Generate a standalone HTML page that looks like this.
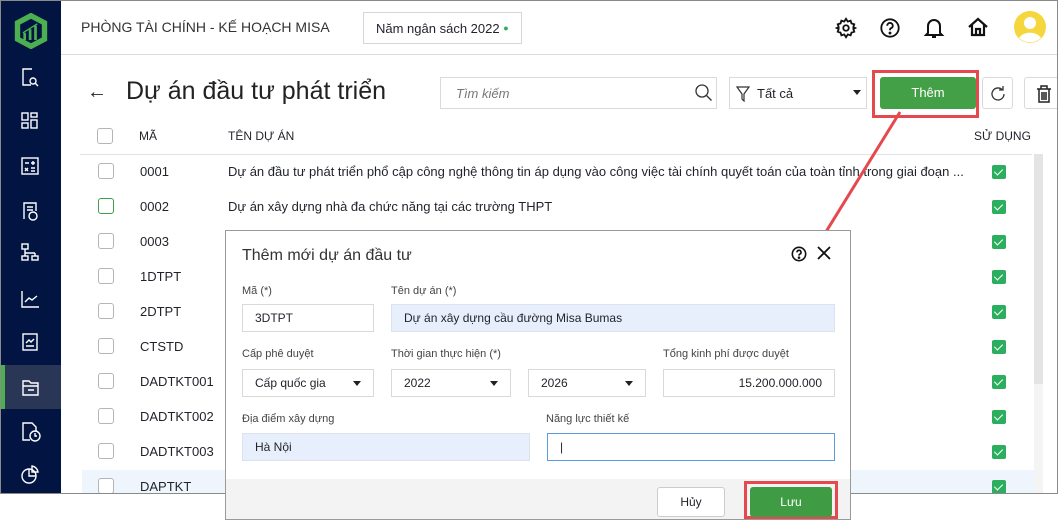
<!DOCTYPE html>
<html><head><meta charset="utf-8"><style>
*{box-sizing:border-box;margin:0;padding:0}
body{width:1058px;height:522px;background:#fff;font-family:"Liberation Sans",sans-serif;color:#1f2229;position:relative;overflow:hidden}
.frame{position:absolute;left:0;top:0;width:1058px;height:494px;border:1px solid #8a8a8a;overflow:hidden;background:#fff}
.side{position:absolute;left:0;top:0;width:60px;height:494px;background:#021441}
.side svg{position:absolute;left:19px}
.act{position:absolute;left:0;top:364px;width:60px;height:44px;background:#2a3656;border-left:4px solid #4caf50}
.hdr{position:absolute;left:60px;top:0;right:0;height:54px;border-bottom:1px solid #dcdcdc}
.abs{position:absolute}
.cb{position:absolute;width:16px;height:16px;border:1px solid #b5b5b5;border-radius:3px;background:#fff}
.ck{position:absolute;width:14px;height:14px;background:#2bae5e;border-radius:2px}
.ck:after{content:"";position:absolute;left:4px;top:2px;width:4px;height:7px;border:solid #fff;border-width:0 1.5px 1.5px 0;transform:rotate(45deg)}
.t{position:absolute;font-size:13px;white-space:nowrap}
.dlg{position:absolute;left:225px;top:230px;width:626px;height:290px;background:#fff;border:1px solid #9a9a9a}
.lbl{position:absolute;font-size:11px;color:#444}
.inp{position:absolute;height:28px;border:1px solid #d9d9d9;font-size:12px;padding:0 12px;line-height:26px;background:#fff}
.blue{background:#e8effc;border-color:#dde3ee}
.dd:after{content:"";position:absolute;right:12px;top:11px;border:4px solid transparent;border-top:5px solid #222}
</style></head><body>
<div class="frame">
<div class="side">
 <svg style="top:12px;left:12px" width="36" height="36" viewBox="0 0 40 40"><path d="M20 3 L35 11 V29 L20 37 L5 29 V11 Z" fill="none" stroke="#4caf50" stroke-width="6"/><path d="M13 30V22M19 30V18M25 30V14" stroke="#4caf50" stroke-width="3"/><path d="M11 22 L27 12" stroke="#4caf50" stroke-width="1.5"/></svg>
 <svg style="top:66px" width="20" height="20" viewBox="0 0 20 20" fill="none" stroke="#fff" stroke-width="1.4"><path d="M12 2H3v16h8"/><circle cx="13" cy="14" r="3"/><path d="M15 16l3 3"/></svg>
 <svg style="top:110px" width="20" height="20" viewBox="0 0 20 20" fill="none" stroke="#fff" stroke-width="1.4"><rect x="2" y="2" width="6" height="7"/><rect x="11" y="2" width="6" height="4"/><rect x="2" y="12" width="6" height="5"/><rect x="11" y="9" width="6" height="8"/></svg>
 <svg style="top:155px" width="20" height="20" viewBox="0 0 20 20" fill="none" stroke="#fff" stroke-width="1.4"><rect x="2" y="2" width="16" height="16"/><path d="M5 7h4M13 5v4M11 7h4M5 12l3 3M8 12l-3 3M11 12h4M11 15h4"/></svg>
 <svg style="top:200px" width="20" height="20" viewBox="0 0 20 20" fill="none" stroke="#fff" stroke-width="1.4"><path d="M4 18V2h12v8"/><path d="M7 6h6M7 9h6"/><circle cx="13" cy="15" r="4"/></svg>
 <svg style="top:241px" width="20" height="20" viewBox="0 0 20 20" fill="none" stroke="#fff" stroke-width="1.4"><rect x="2" y="2" width="6" height="5"/><path d="M5 7v4M5 11h10M5 11v3M15 11v3"/><rect x="2" y="14" width="6" height="4"/><rect x="12" y="14" width="6" height="4"/></svg>
 <svg style="top:288px" width="20" height="20" viewBox="0 0 20 20" fill="none" stroke="#fff" stroke-width="1.4"><path d="M2 2v16h17"/><path d="M5 13l4-4 3 2 5-4"/></svg>
 <svg style="top:331px" width="20" height="20" viewBox="0 0 20 20" fill="none" stroke="#fff" stroke-width="1.4"><rect x="3" y="2" width="14" height="16"/><path d="M6 11l3-3 2 2 3-3M6 14h8"/></svg>
 <div class="act"></div>
 <svg style="top:376px;left:20px" width="20" height="20" viewBox="0 0 20 20" fill="none" stroke="#fff" stroke-width="1.4"><path d="M2 4h6l2 2h7v12H2z"/><path d="M2 9h15M7 13h6"/></svg>
 <svg style="top:420px" width="22" height="22" viewBox="0 0 22 22" fill="none" stroke="#fff" stroke-width="1.4"><path d="M10 19H3V2h9l4 4v4"/><circle cx="15" cy="15" r="5"/><path d="M15 12v3h2"/></svg>
 <svg style="top:464px" width="20" height="20" viewBox="0 0 20 20" fill="none" stroke="#fff" stroke-width="1.4"><circle cx="9" cy="11" r="7"/><path d="M9 4v7h7M12 1a7 7 0 0 1 6 6h-6z"/></svg>
</div>
<div class="hdr">
 <div class="t" style="left:20px;top:18px;font-size:14px;color:#333">PHÒNG TÀI CHÍNH - KẾ HOẠCH MISA</div>
 <div class="abs" style="left:302px;top:11px;width:159px;height:32px;border:1px solid #d6d6d6;font-size:13px;line-height:30px;padding-left:12px">Năm ngân sách 2022 <span style="color:#2bae5e;font-size:9px;vertical-align:2px">●</span></div>
 <svg class="abs" style="left:774px;top:16px" width="22" height="22" viewBox="0 0 24 24" fill="none" stroke="#111" stroke-width="2"><circle cx="12" cy="12" r="3"/><path d="M12 2l2 3 3-1 1 3 3 1-1 3 2 1-2 1 1 3-3 1-1 3-3-1-2 3-2-3-3 1-1-3-3-1 1-3-2-1 2-1-1-3 3-1 1-3 3 1z"/></svg>
 <svg class="abs" style="left:818px;top:16px" width="22" height="22" viewBox="0 0 24 24" fill="none" stroke="#111" stroke-width="2"><circle cx="12" cy="12" r="9.5"/><path d="M9 9.5a3 3 0 1 1 4 2.8c-1 .4-1 1-1 2.2"/><circle cx="12" cy="17.5" r=".6" fill="#111"/></svg>
 <svg class="abs" style="left:862px;top:15px" width="22" height="24" viewBox="0 0 22 24" fill="none" stroke="#111" stroke-width="2"><path d="M5 17V10a6 6 0 0 1 12 0v7l2 2H3z"/><path d="M9 21h4"/></svg>
 <svg class="abs" style="left:906px;top:15px" width="22" height="22" viewBox="0 0 22 22" fill="none" stroke="#111" stroke-width="2.2"><path d="M2 11L11 3l9 8M5 9v10h12V9M9 19v-6h4v6"/></svg>
 <svg class="abs" style="left:952px;top:9px" width="34" height="34" viewBox="0 0 34 34"><circle cx="17" cy="17" r="16" fill="#f5d63d"/><circle cx="17" cy="13" r="6" fill="#fff"/><path d="M6 28a12 9 0 0 1 22 0a16 16 0 0 1-22 0z" fill="#fff"/></svg>
</div>
<div class="t" style="left:86px;top:80px;font-size:20px">←</div>
<div class="t" style="left:125px;top:76px;font-size:25px;color:#222">Dự án đầu tư phát triển</div>
<div class="abs" style="left:439px;top:76px;width:277px;height:32px;border:1px solid #dadada"><span class="t" style="left:15px;top:8px;font-style:italic;color:#777">Tìm kiếm</span>
<svg class="abs" style="left:254px;top:6px" width="18" height="18" viewBox="0 0 18 18" fill="none" stroke="#333" stroke-width="1.3"><circle cx="7" cy="7" r="6"/><path d="M11.5 11.5l5 5"/></svg></div>
<div class="abs" style="left:728px;top:76px;width:138px;height:32px;border:1px solid #dadada">
 <svg class="abs" style="left:6px;top:8px" width="14" height="16" viewBox="0 0 14 16" fill="none" stroke="#333" stroke-width="1.2"><path d="M1 1h12L8 8v7l-2-2V8z"/></svg>
 <span class="t" style="left:27px;top:8px">Tất cả</span><span class="abs" style="right:5px;top:12px;border:4px solid transparent;border-top:5px solid #222"></span></div>
<div class="abs" style="left:871px;top:69px;width:107px;height:48px;border:3px solid #e5484d"></div>
<div class="abs" style="left:879px;top:76px;width:96px;height:32px;background:#44a047;border-radius:3px;color:#fff;font-size:13px;text-align:center;line-height:32px">Thêm</div>
<div class="abs" style="left:981px;top:76px;width:31px;height:32px;border:1px solid #dadada;border-radius:3px"><svg class="abs" style="left:6px;top:7px" width="18" height="18" viewBox="0 0 18 18" fill="none" stroke="#333" stroke-width="1.3"><path d="M15 9a6 6 0 1 1-2-4.5M14 1v4h-4"/></svg></div>
<div class="abs" style="left:1023px;top:76px;width:40px;height:32px;border:1px solid #dadada;border-radius:3px"><svg class="abs" style="left:11px;top:7px" width="16" height="18" viewBox="0 0 16 18" fill="none" stroke="#222" stroke-width="1.5"><path d="M1 4h14M5 4V1h6v3M3 4v13h10V4M6 7v8M8 7v8M10 7v8"/></svg></div>
<div class="cb" style="left:96px;top:127px"></div>
<div class="t" style="left:138px;top:128px;font-size:12px">MÃ</div>
<div class="t" style="left:227px;top:128px;font-size:12px">TÊN DỰ ÁN</div>
<div class="t" style="left:973px;top:128px;font-size:12px">SỬ DỤNG</div>
<div class="abs" style="left:79px;top:153px;width:952px;height:1px;background:#e2e2e2"></div>
<div class="abs" style="left:1033px;top:153px;width:9px;height:340px;background:#f4f4f4"></div>
<div class="abs" style="left:1033px;top:153px;width:9px;height:230px;background:#e4e4e4"></div>
<div class="abs" style="left:81px;top:469px;width:952px;height:25px;background:#eef5fd"></div>
<div class="cb" style="left:97px;top:162px"></div><div class="t" style="left:139px;top:163px">0001</div><div class="t" style="left:227px;top:163px">Dự án đầu tư phát triển phổ cập công nghệ thông tin áp dụng vào công việc tài chính quyết toán của toàn tỉnh trong giai đoạn ...</div>
<div class="cb" style="left:97px;top:197px;border-color:#3e9d4b"></div><div class="t" style="left:139px;top:198px">0002</div><div class="t" style="left:227px;top:198px">Dự án xây dựng nhà đa chức năng tại các trường THPT</div>
<div class="cb" style="left:97px;top:232px"></div><div class="t" style="left:139px;top:233px">0003</div>
<div class="cb" style="left:97px;top:267px"></div><div class="t" style="left:139px;top:268px">1DTPT</div>
<div class="cb" style="left:97px;top:302px"></div><div class="t" style="left:139px;top:303px">2DTPT</div>
<div class="cb" style="left:97px;top:337px"></div><div class="t" style="left:139px;top:338px">CTSTD</div>
<div class="cb" style="left:97px;top:372px"></div><div class="t" style="left:139px;top:373px">DADTKT001</div>
<div class="cb" style="left:97px;top:407px"></div><div class="t" style="left:139px;top:408px">DADTKT002</div>
<div class="cb" style="left:97px;top:442px"></div><div class="t" style="left:139px;top:443px">DADTKT003</div>
<div class="cb" style="left:97px;top:477px"></div><div class="t" style="left:139px;top:478px">DAPTKT</div>
<div class="ck" style="left:991px;top:164px"></div><div class="ck" style="left:991px;top:199px"></div><div class="ck" style="left:991px;top:234px"></div><div class="ck" style="left:991px;top:269px"></div><div class="ck" style="left:991px;top:304px"></div><div class="ck" style="left:991px;top:339px"></div><div class="ck" style="left:991px;top:374px"></div><div class="ck" style="left:991px;top:409px"></div><div class="ck" style="left:991px;top:444px"></div><div class="ck" style="left:991px;top:479px"></div>
</div>
<svg class="abs" style="left:0;top:0" width="1058" height="522"><line x1="900" y1="112" x2="790" y2="290" stroke="#e5484d" stroke-width="3"/><path d="M782 298L786 280L798 288Z" fill="#e5484d"/></svg>
<div class="dlg">
 <div class="t" style="left:16px;top:16px;font-size:16px;color:#333">Thêm mới dự án đầu tư</div>
 <svg class="abs" style="left:565px;top:15px" width="16" height="16" viewBox="0 0 24 24" fill="none" stroke="#111" stroke-width="2.4"><circle cx="12" cy="12" r="10"/><path d="M9 9.5a3 3 0 1 1 4 2.8c-1 .4-1 1-1 2.2"/><circle cx="12" cy="17.5" r=".8" fill="#111"/></svg>
 <svg class="abs" style="left:591px;top:15px" width="14" height="14" viewBox="0 0 14 14" stroke="#111" stroke-width="1.8"><path d="M1 1l12 12M13 1L1 13"/></svg>
 <div class="lbl" style="left:16px;top:54px">Mã (*)</div>
 <div class="lbl" style="left:165px;top:54px">Tên dự án (*)</div>
 <div class="inp" style="left:16px;top:73px;width:132px">3DTPT</div>
 <div class="inp blue" style="left:165px;top:73px;width:444px">Dự án xây dựng cầu đường Misa Bumas</div>
 <div class="lbl" style="left:16px;top:117px">Cấp phê duyệt</div>
 <div class="lbl" style="left:165px;top:117px">Thời gian thực hiện (*)</div>
 <div class="lbl" style="left:437px;top:117px">Tổng kinh phí được duyệt</div>
 <div class="inp dd" style="left:16px;top:138px;width:132px">Cấp quốc gia</div>
 <div class="inp dd" style="left:165px;top:138px;width:120px">2022</div>
 <div class="inp dd" style="left:302px;top:138px;width:118px">2026</div>
 <div class="inp" style="left:437px;top:138px;width:172px;text-align:right">15.200.000.000</div>
 <div class="lbl" style="left:16px;top:182px">Địa điểm xây dựng</div>
 <div class="lbl" style="left:320px;top:182px">Năng lực thiết kế</div>
 <div class="inp blue" style="left:16px;top:202px;width:288px">Hà Nội</div>
 <div class="inp" style="left:321px;top:202px;width:288px;border-color:#5b9be0">|</div>
 <div class="abs" style="left:0;top:248px;width:624px;height:40px;background:#f3f3f3"></div>
 <div class="abs" style="left:431px;top:256px;width:68px;height:30px;border:1px solid #ccc;border-radius:3px;background:#fff;font-size:12px;text-align:center;line-height:28px">Hủy</div>
 <div class="abs" style="left:518px;top:250px;width:94px;height:38px;border:3px solid #e5484d"></div>
 <div class="abs" style="left:524px;top:256px;width:82px;height:30px;background:#3f9c45;border-radius:3px;color:#fff;font-size:12px;text-align:center;line-height:30px">Lưu</div>
</div>
</body></html>
